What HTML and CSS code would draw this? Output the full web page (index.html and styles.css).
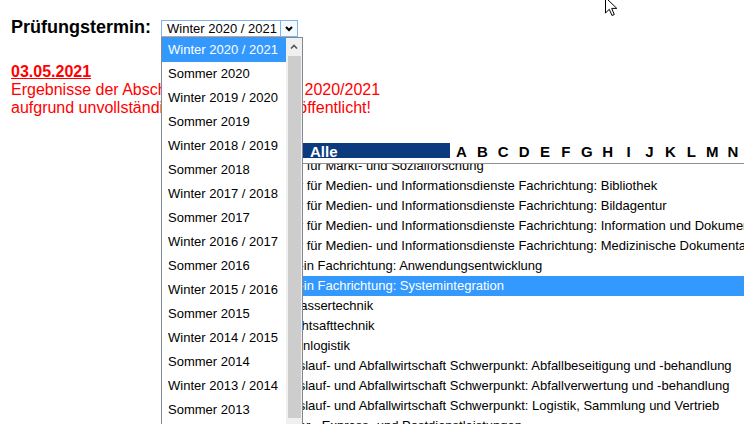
FILE: index.html
```html
<!DOCTYPE html>
<html lang="de">
<head>
  <meta charset="UTF-8">
  <meta name="viewport" content="width=device-width, initial-scale=1.0">
  <title>Prüfungsergebnisse</title>
  <link rel="stylesheet" href="styles.css">
</head>
<body>
  <div class="page">
    <!-- Auswahl Prüfungstermin -->
    <div class="term-row">
      <label class="term-label">Prüfungstermin:</label>
      <div class="term-select">
        <div class="select-box">
          <span class="select-value">Winter 2020 / 2021</span>
          <span class="select-btn">
            <svg width="8" height="6" viewBox="0 0 8 6"><path d="M1 1 L4 4 L7 1" fill="none" stroke="#000" stroke-width="2"/></svg>
          </span>
        </div>

        <!-- aufgeklappte Liste -->
        <div class="select-menu">
          <ul class="menu-list">
            <li class="menu-item is-active">Winter 2020 / 2021</li>
            <li class="menu-item">Sommer 2020</li>
            <li class="menu-item">Winter 2019 / 2020</li>
            <li class="menu-item">Sommer 2019</li>
            <li class="menu-item">Winter 2018 / 2019</li>
            <li class="menu-item">Sommer 2018</li>
            <li class="menu-item">Winter 2017 / 2018</li>
            <li class="menu-item">Sommer 2017</li>
            <li class="menu-item">Winter 2016 / 2017</li>
            <li class="menu-item">Sommer 2016</li>
            <li class="menu-item">Winter 2015 / 2016</li>
            <li class="menu-item">Sommer 2015</li>
            <li class="menu-item">Winter 2014 / 2015</li>
            <li class="menu-item">Sommer 2014</li>
            <li class="menu-item">Winter 2013 / 2014</li>
            <li class="menu-item">Sommer 2013</li>
            <li class="menu-item">Winter 2012 / 2013</li>
          </ul>
          <div class="menu-scroll">
            <div class="scroll-up">
              <svg width="8" height="5" viewBox="0 0 8 5"><path d="M1 4.5 L4 1.5 L7 4.5" fill="none" stroke="#555" stroke-width="1.6"/></svg>
            </div>
            <div class="scroll-thumb"></div>
          </div>
        </div>
      </div>
    </div>

    <!-- Hinweis -->
    <div class="notice">
      <span class="notice-date">03.05.2021</span><br>
      Ergebnisse der Abschlussprüfung Winter 2020/2021<br>
      aufgrund unvollständiger Daten nicht veröffentlicht!
    </div>

    <!-- Berufe A-Z -->
    <div class="catalog">
      <div class="alpha-bar">
        <span class="alpha-all">Alle</span>
        <span class="alpha-letter">A</span>
        <span class="alpha-letter">B</span>
        <span class="alpha-letter">C</span>
        <span class="alpha-letter">D</span>
        <span class="alpha-letter">E</span>
        <span class="alpha-letter">F</span>
        <span class="alpha-letter">G</span>
        <span class="alpha-letter">H</span>
        <span class="alpha-letter">I</span>
        <span class="alpha-letter">J</span>
        <span class="alpha-letter">K</span>
        <span class="alpha-letter">L</span>
        <span class="alpha-letter">M</span>
        <span class="alpha-letter">N</span>
        <span class="alpha-letter">O</span>
        <span class="alpha-letter">P</span>
        <span class="alpha-letter">R</span>
        <span class="alpha-letter">S</span>
      </div>

      <div class="listbox">
        <ul class="listbox-rows">
          <li class="listbox-row">Fachangestellte/-r für Markt- und Sozialforschung</li>
          <li class="listbox-row">Fachangestellte/-r für Medien- und Informationsdienste Fachrichtung: Bibliothek</li>
          <li class="listbox-row">Fachangestellte/-r für Medien- und Informationsdienste Fachrichtung: Bildagentur</li>
          <li class="listbox-row">Fachangestellte/-r für Medien- und Informationsdienste Fachrichtung: Information und Dokumentation</li>
          <li class="listbox-row">Fachangestellte/-r für Medien- und Informationsdienste Fachrichtung: Medizinische Dokumentation</li>
          <li class="listbox-row">Fachinformatiker/-in Fachrichtung: Anwendungsentwicklung</li>
          <li class="listbox-row is-selected">Fachinformatiker/-in Fachrichtung: Systemintegration</li>
          <li class="listbox-row">Fachkraft für Abwassertechnik</li>
          <li class="listbox-row">Fachkraft für Fruchtsafttechnik</li>
          <li class="listbox-row">Fachkraft für Hafenlogistik</li>
          <li class="listbox-row">Fachkraft für Kreislauf- und Abfallwirtschaft Schwerpunkt: Abfallbeseitigung und -behandlung</li>
          <li class="listbox-row">Fachkraft für Kreislauf- und Abfallwirtschaft Schwerpunkt: Abfallverwertung und -behandlung</li>
          <li class="listbox-row">Fachkraft für Kreislauf- und Abfallwirtschaft Schwerpunkt: Logistik, Sammlung und Vertrieb</li>
          <li class="listbox-row">Fachkraft für Kurier-, Express- und Postdienstleistungen</li>
        </ul>
      </div>
    </div>
  </div>

  <!-- Mauszeiger -->
  <svg class="cursor" width="13" height="20" viewBox="0 0 13 20">
    <path d="M0.5 0.5 V16 L4.3 12.3 L7 18.5 L9.3 17.5 L6.7 11.4 H11.8 Z" fill="#fff" stroke="#000" stroke-width="1"/>
  </svg>
</body>
</html>
```

FILE: styles.css
```css
html, body {
  margin: 0;
  overflow: hidden;
}

body {
  font-family: "Liberation Sans", Arial, sans-serif;
  color: #000;
  background: #fff;
  position: relative;
  width: 744px;
  height: 424px;
}

.page {
  padding: 17px 0 0 11px;
}

/* Prüfungstermin */
.term-row {
  display: flex;
  align-items: baseline;
  gap: 10px;
}

.term-label {
  font-size: 18px;
  font-weight: bold;
}

.term-select {
  position: relative;
  z-index: 2;
}

.select-box {
  display: flex;
  width: 137px;
  height: 17px;
  box-sizing: border-box;
  border: 1px solid #7eb4ea;
  font-size: 13px;
  line-height: 15px;
}

.select-value {
  flex: 1;
  padding-left: 5px;
}

.select-btn {
  width: 16px;
  border-left: 1px solid #7eb4ea;
  background: #f4f9fe;
  display: flex;
  align-items: center;
  justify-content: center;
}

.select-menu {
  position: absolute;
  top: 100%;
  left: 0;
  width: 142px;
  height: 400px;
  box-sizing: border-box;
  border: 1px solid #828790;
  background: #fff;
  display: flex;
  overflow: hidden;
}

.menu-list {
  list-style: none;
  margin: 0;
  padding: 0;
  width: 124px;
  font-size: 13px;
}

.menu-item {
  height: 24px;
  line-height: 24px;
  padding-left: 6px;
  white-space: nowrap;
}

.menu-item.is-active {
  background: #3399ff;
  color: #fff;
}

.menu-scroll {
  width: 16px;
  background: #f0f0f0;
  display: flex;
  flex-direction: column;
}

.scroll-up {
  height: 17px;
  display: flex;
  align-items: center;
  justify-content: center;
}

.scroll-thumb {
  margin: 1px 1px 0 2px;
  height: 362px;
  background: #cdcdcd;
}

/* Hinweis */
.notice {
  margin-top: 25px;
  font-size: 16px;
  color: #ff0000;
}

.notice-date {
  font-weight: bold;
  text-decoration: underline;
}

/* Berufe */
.catalog {
  margin: 26px 0 0 185px;
  width: 700px;
}

.alpha-bar {
  display: flex;
  gap: 2px;
  height: 15px;
  font-size: 15px;
  font-weight: bold;
  line-height: 17px;
}

.alpha-all {
  flex: none;
  width: 254px;
  box-sizing: border-box;
  padding-left: 114px;
  background: #0b3b7e;
  color: #fff;
}

.alpha-letter {
  flex: none;
  width: 18.9px;
  text-align: center;
}

.listbox {
  margin-top: 5px;
  border-top: 1px solid #8f8f8f;
  height: 300px;
  overflow: hidden;
  font-size: 13px;
}

.listbox-rows {
  list-style: none;
  margin: -8px 0 0 0;
  padding: 0;
}

.listbox-row {
  height: 20px;
  line-height: 20px;
  padding-left: 3px;
  white-space: nowrap;
}

.listbox-row.is-selected {
  background: #3399ff;
  color: #fff;
}

.cursor {
  position: absolute;
  left: 605px;
  top: -3px;
}
```
